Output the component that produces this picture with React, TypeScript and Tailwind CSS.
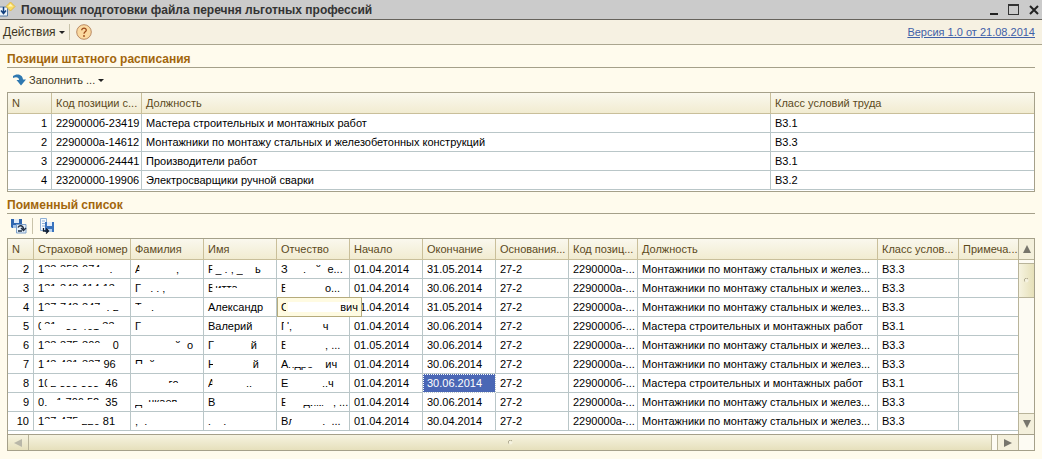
import React from "react";

type Kind = "full" | "top" | "mid" | "bottom" | "left" | "right";
type Piece = [string, Kind];

const clip: Record<Kind, string> = {
  full: "",
  top: "[clip-path:inset(0_0_9px_0)]",
  mid: "[clip-path:inset(0_0_7px_0)]",
  bottom: "[clip-path:inset(10px_0_0_0)]",
  left: "[clip-path:inset(0_3px_0_0)]",
  right: "[clip-path:inset(0_0_0_3px)]",
};

function Hidden({ pieces }: { pieces: Piece[] }) {
  return (
    <span className="flex whitespace-pre">
      {pieces.map(([text, kind], i) => (
        <span key={i} className={clip[kind]}>
          {text}
        </span>
      ))}
    </span>
  );
}

const f = (s: string): Piece => [s, "full"];
const t = (s: string): Piece => [s, "top"];
const m = (s: string): Piece => [s, "mid"];
const b = (s: string): Piece => [s, "bottom"];
const l = (s: string): Piece => [s, "left"];
const r = (s: string): Piece => [s, "right"];

const positions = [
  ["1", "2290000б-23419", "Мастера строительных и монтажных работ", "В3.1"],
  ["2", "2290000а-14612", "Монтажники по монтажу стальных и железобетонных конструкций", "В3.3"],
  ["3", "2290000б-24441", "Производители работ", "В3.1"],
  ["4", "23200000-19906", "Электросварщики ручной сварки", "В3.2"],
];

interface Person {
  n: number;
  insurance: Piece[];
  surname: Piece[];
  name: Piece[];
  patronymic: Piece[];
  start: string;
  end: string;
  foreman?: boolean;
}

const people: Person[] = [
  { n: 2, insurance: [f("1"), t("33-353-074"), b("   .")], surname: [l("А"), b("           ,")], name: [l("Р"), b("_ . , _"), f("    ь")], patronymic: [f("З"), b("     ."), t("   й"), f("  е...")], start: "01.04.2014", end: "31.05.2014" },
  { n: 3, insurance: [f("1"), t("31-343-114 13")], surname: [f("Г"), b("   . . ,")], name: [l("В"), m("итта")], patronymic: [l("Б"), f("            о...")], start: "01.04.2014", end: "30.06.2014" },
  { n: 4, insurance: [f("1"), t("37-743-347"), b("  . 2")], surname: [t("Т"), b("   .")], name: [f("Александр")], patronymic: [], start: "01.04.2014", end: "31.05.2014" },
  { n: 5, insurance: [l("0"), t("31"), b("   30 401"), t(" 33")], surname: [f("Г")], name: [f("Валерий")], patronymic: [l("Г"), t("'"), b(","), f("          ч")], start: "01.04.2014", end: "30.06.2014", foreman: true },
  { n: 6, insurance: [f("1"), t("33-375-300"), r("    0")], surname: [t("             й"), f("  о")], name: [f("Г"), f("            й")], patronymic: [l("В"), b("            ,"), f(" ...")], start: "01.05.2014", end: "30.06.2014" },
  { n: 7, insurance: [f("1"), t("43-431-337"), f(" 96")], surname: [m("П"), t("  й")], name: [l("Н"), r("            й")], patronymic: [f("А"), b("ндре"), f("    ич")], start: "01.04.2014", end: "30.06.2014" },
  { n: 8, insurance: [f("1"), l("0"), b("2 333 333"), f("  46")], surname: [m("           го")], name: [l("А"), b("          ..")], patronymic: [f("Е"), b("           .."), f("ч")], start: "01.04.2014", end: "30.06.2014", foreman: true },
  { n: 9, insurance: [f("0"), b(". "), t("  1 706 52"), f("  35")], surname: [b("Д"), m("  чкаев")], name: [f("В")], patronymic: [l("Е"), b("     дим"), b("   , "), f("...")], start: "01.04.2014", end: "30.06.2014" },
  { n: 10, insurance: [f("1"), t("37-475"), b(" 220"), f(" 81")], surname: [b(",  .")], name: [b("Г   .")], patronymic: [f("В"), l("л"), b("         . "), f(" ...")], start: "01.04.2014", end: "30.04.2014" },
];

const headings = ["N", "Страховой номер", "Фамилия", "Имя", "Отчество", "Начало", "Окончание", "Основания...", "Код позиц...", "Должность", "Класс услов...", "Примеча..."];

const th =
  "h-[21px] overflow-hidden border-r border-b border-[#c9bf9a] pl-1 text-left font-normal whitespace-nowrap text-[#5c4a1c] last:border-r-0";
const td =
  "h-[19px] overflow-hidden border-r border-b border-[#b9c6c8] pl-1 whitespace-nowrap last:border-r-0";
const head = "bg-linear-to-b from-[#faf8ee] to-[#f1ebcf]";

function SectionTitle({ children }: { children: React.ReactNode }) {
  return (
    <h2 className="border-b border-[#a5a08a] text-xs leading-[15px] font-bold text-[#a2660c]">
      {children}
    </h2>
  );
}

function Arrow({ points }: { points: string }) {
  return (
    <svg viewBox="0 0 8 8" className="size-2" aria-hidden="true">
      <polygon points={points} fill="currentColor" />
    </svg>
  );
}

function Caret() {
  return (
    <svg viewBox="0 0 6 3" className="h-[3px] w-1.5" aria-hidden="true">
      <path d="M0 0h6L3 3z" fill="#222" />
    </svg>
  );
}

function Grip() {
  return (
    <svg viewBox="0 0 5 5" className="size-[5px]" aria-hidden="true">
      <circle cx="2.500" cy="2.500" r="2" fill="#f5f2df" />
      <path d="M.7 3.500A2 2 0 0 1 4 1" fill="none" stroke="#aaa58c" />
    </svg>
  );
}

export default function App() {
  return (
    <div className="min-h-screen bg-[#fffbed] pb-2 font-['Liberation_Sans',Arial,sans-serif] text-[11px] leading-[14px] text-black">
      <header className="flex h-5 items-center border-b border-[#66635c] bg-[#cbcbcb]">
        <svg viewBox="0 0 16 18" className="h-[18px] w-4 shrink-0" aria-hidden="true">
          <path d="M0 6h7.500v9H0" fill="#eef4fa" stroke="#5b7ea6" />
          <path d="M3.500 6v6M1 9.500L3.500 12.500 6 9.500" fill="none" stroke="#123f7d" strokeWidth="1.500" />
          <path d="M10.500 1L15 5.500 10.500 10 6 5.500z" fill="#f9dc62" stroke="#e0b94a" />
          <path d="M10.500 3L13 5.500H8z" fill="#fff6bd" />
        </svg>
        <h1 className="ml-[5px] flex-1 truncate text-xs font-bold text-[#333]">
          Помощик подготовки файла перечня льготных профессий
        </h1>
        <div className="flex h-full items-center gap-2 pr-[3px]">
          <button aria-label="Свернуть" className="flex h-2.5 w-3 items-end justify-end">
            <span className="h-0.5 w-2 bg-[#222]" />
          </button>
          <button aria-label="Развернуть" className="ml-0.5 h-[11px] w-[11px] border border-t-2 border-[#333]" />
          <button aria-label="Закрыть" className="ml-0.5">
            <svg viewBox="0 0 10 10" className="size-[10px]" aria-hidden="true">
              <path d="M1 1l8 8M9 1L1 9" stroke="#222" strokeWidth="2" />
            </svg>
          </button>
        </div>
      </header>

      <div className="flex h-[25px] items-center border-b border-[#aaa58f] bg-[#f6f1e2] pr-[7px] pl-[3px]">
        <button className="flex items-center gap-[3px] text-xs text-[#3d3522]">
          Действия <Caret />
        </button>
        <span className="ml-1 h-4 w-px bg-[#c9c3aa]" />
        <button aria-label="Справка" className="ml-1.5">
          <svg viewBox="0 0 16 16" className="size-4" aria-hidden="true">
            <circle cx="8" cy="8" r="7.300" fill="#fbd9a0" stroke="#b98a62" />
            <path d="M5.700 6.300C5.700 3.400 10.400 3.500 10.300 6.200C10.200 7.800 8 8 8 9.800" fill="none" stroke="#9c4a1a" strokeWidth="1.300" />
            <circle cx="8" cy="12" r="0.900" fill="#9c4a1a" />
          </svg>
        </button>
        <a href="#version" className="ml-auto text-[#3f5fa8] underline">
          Версия 1.0 от 21.08.2014
        </a>
      </div>

      <main className="px-[7px] pt-[7px]">
        <SectionTitle>Позиции штатного расписания</SectionTitle>
        <div className="flex h-6 items-center pl-1.5">
          <button className="flex items-center gap-[3px] text-[#3d3522]">
            <svg viewBox="0 0 13 12" className="h-3 w-[13px]" aria-hidden="true">
              <path d="M0 2C3-.5 9.500-.5 10 5.500H13L8 11.500 3.500 6H6C6 3.500 3.500 2.500 0 4z" fill="#2f78b0" />
            </svg>
            Заполнить ... <Caret />
          </button>
        </div>
        <div className="border border-[#a5a08a] bg-white pb-px">
          <table className="w-full table-fixed border-separate border-spacing-0">
            <colgroup>
              <col className="w-[44px]" />
              <col className="w-[90px]" />
              <col />
              <col className="w-[263px]" />
            </colgroup>
            <thead className={head}>
              <tr>
                <th className={th}>N</th>
                <th className={th}>Код позиции с...</th>
                <th className={th}>Должность</th>
                <th className={th}>Класс условий труда</th>
              </tr>
            </thead>
            <tbody>
              {positions.map(([n, code, title, grade]) => (
                <tr key={n}>
                  <td className={td + " pr-1 text-right"}>{n}</td>
                  <td className={td}>{code}</td>
                  <td className={td}>{title}</td>
                  <td className={td}>{grade}</td>
                </tr>
              ))}
            </tbody>
          </table>
        </div>

        <div className="pt-1.5">
          <SectionTitle>Поименный список</SectionTitle>
        </div>
        <div className="flex h-6 items-center pl-1">
          <button aria-label="Сохранить">
            <svg viewBox="0 0 16 16" className="size-4" aria-hidden="true">
              <path d="M0 1h11v9H1L0 9z" fill="#2f66b0" />
              <path d="M3 1h5v4H3z" fill="#dfeaf7" />
              <path d="M2 7h4v3H2z" fill="#9fc0e6" />
              <path d="M5.500 6.500h9.500v8.500H5.500z" fill="#e6f0fa" stroke="#7c9fc9" />
              <path d="M7 9.500C8.500 7 12 7 12.500 11M10 10l2.500 2.500L15 10M7 13h4" fill="none" stroke="#1d2b40" strokeWidth="1.400" />
            </svg>
          </button>
          <span className="mx-[5px] h-4 w-px bg-[#c9c3aa]" />
          <button aria-label="Загрузить" className="ml-px">
            <svg viewBox="0 0 16 16" className="size-4" aria-hidden="true">
              <path d="M1.500.5h6v12h-6z" fill="#f5f9fd" stroke="#8fb0d5" />
              <path d="M3 3h3M3 5.500h3M3 8h3" stroke="#8fb0d5" />
              <path d="M6 4h9v10H6z" fill="#3a73bd" />
              <path d="M8 4h5v4H8z" fill="#e4eefa" />
              <path d="M9 11h4v3H9z" fill="#b9d2ee" />
              <path d="M4.500 10v3H9M7 10.500L9.500 13 7 15.500" fill="none" stroke="#111c2e" strokeWidth="1.300" />
            </svg>
          </button>
        </div>

        <div className="border border-[#a5a08a] bg-white">
          <div className="flex">
            <div className="min-w-0 flex-1 pb-[3px]">
              <table className="w-full table-fixed border-separate border-spacing-0">
                <colgroup>
                  <col className="w-[26px]" />
                  <col className="w-[97px]" />
                  <col className="w-[73px]" />
                  <col className="w-[73px]" />
                  <col className="w-[73px]" />
                  <col className="w-[73px]" />
                  <col className="w-[73px]" />
                  <col className="w-[73px]" />
                  <col className="w-[69px]" />
                  <col />
                  <col className="w-[81px]" />
                  <col className="w-[59px]" />
                </colgroup>
                <thead className={head}>
                  <tr>
                    {headings.map((h) => (
                      <th key={h} className={th}>{h}</th>
                    ))}
                  </tr>
                </thead>
                <tbody>
                  {people.map((p) => (
                    <tr key={p.n}>
                      <td className={td + " pr-1 text-right"}>{p.n}</td>
                      <td className={td}><Hidden pieces={p.insurance} /></td>
                      <td className={td}><Hidden pieces={p.surname} /></td>
                      <td className={td}><Hidden pieces={p.name} /></td>
                      {p.n === 4 ? (
                        <td className="relative h-[19px] border-r border-b border-[#b9c6c8]">
                          <div className="absolute top-[-1px] left-0 z-10 flex h-5 w-[85px] items-center justify-between border border-[#b5ab7c] bg-[#fffbe2] px-[3px]">
                            <span className={clip.left}>С</span>
                            <span className="absolute inset-x-2.5 inset-y-1 bg-white" />
                            <span className="relative">вич</span>
                          </div>
                        </td>
                      ) : (
                        <td className={td}><Hidden pieces={p.patronymic} /></td>
                      )}
                      <td className={td}>{p.start}</td>
                      <td className={td + (p.n === 8 ? " bg-[#4a67b5] text-white outline-1 -outline-offset-1 outline-dotted outline-white" : "")}>{p.end}</td>
                      <td className={td}>27-2</td>
                      <td className={td}>{p.foreman ? "2290000б-..." : "2290000а-..."}</td>
                      <td className={td}>
                        {p.foreman ? "Мастера строительных и монтажных работ" : "Монтажники по монтажу стальных и желез..."}
                      </td>
                      <td className={td}>{p.foreman ? "В3.1" : "В3.3"}</td>
                      <td className={td} />
                    </tr>
                  ))}
                </tbody>
              </table>
            </div>
            <div className="flex w-4 shrink-0 flex-col border-l border-[#b9b49a] bg-[#fdfbf3]">
              <button aria-label="Вверх" className="flex h-[21px] items-center justify-center border-b border-[#b9b49a] bg-[#f4f0dc] text-[#77756c]">
                <Arrow points="4,0 8,8 0,8" />
              </button>
              <div className="mt-[3px] flex h-[35px] items-center justify-center border-y border-[#b9b49a] bg-linear-to-r from-[#f6f3e0] to-[#e6e0b8]">
                <Grip />
              </div>
              <button aria-label="Вниз" className="mt-auto flex h-[21px] items-center justify-center border-t border-[#b9b49a] bg-[#f4f0dc] text-[#77756c]">
                <Arrow points="0,0 8,0 4,8" />
              </button>
            </div>
          </div>
          <div className="flex h-4 border-t border-[#a5a08a] bg-[#fdfbf3]">
            <button aria-label="Влево" className="flex w-[21px] items-center justify-center border-r border-[#b9b49a] bg-linear-to-b from-[#f6f3e0] to-[#e6e0bc] text-[#b9b7a8]">
              <Arrow points="8,0 8,8 0,4" />
            </button>
            <div className="mr-[5px] flex flex-1 items-center justify-center border-r border-[#b9b49a] bg-linear-to-b from-[#f6f3e0] to-[#e6e0bc]">
              <Grip />
            </div>
            <button aria-label="Вправо" className="flex w-[22px] items-center justify-center border-x border-[#b9b49a] bg-[#f4f0dc] text-[#77756c]">
              <Arrow points="0,0 8,4 0,8" />
            </button>
            <span className="w-[15px]" />
          </div>
        </div>
      </main>
    </div>
  );
}
